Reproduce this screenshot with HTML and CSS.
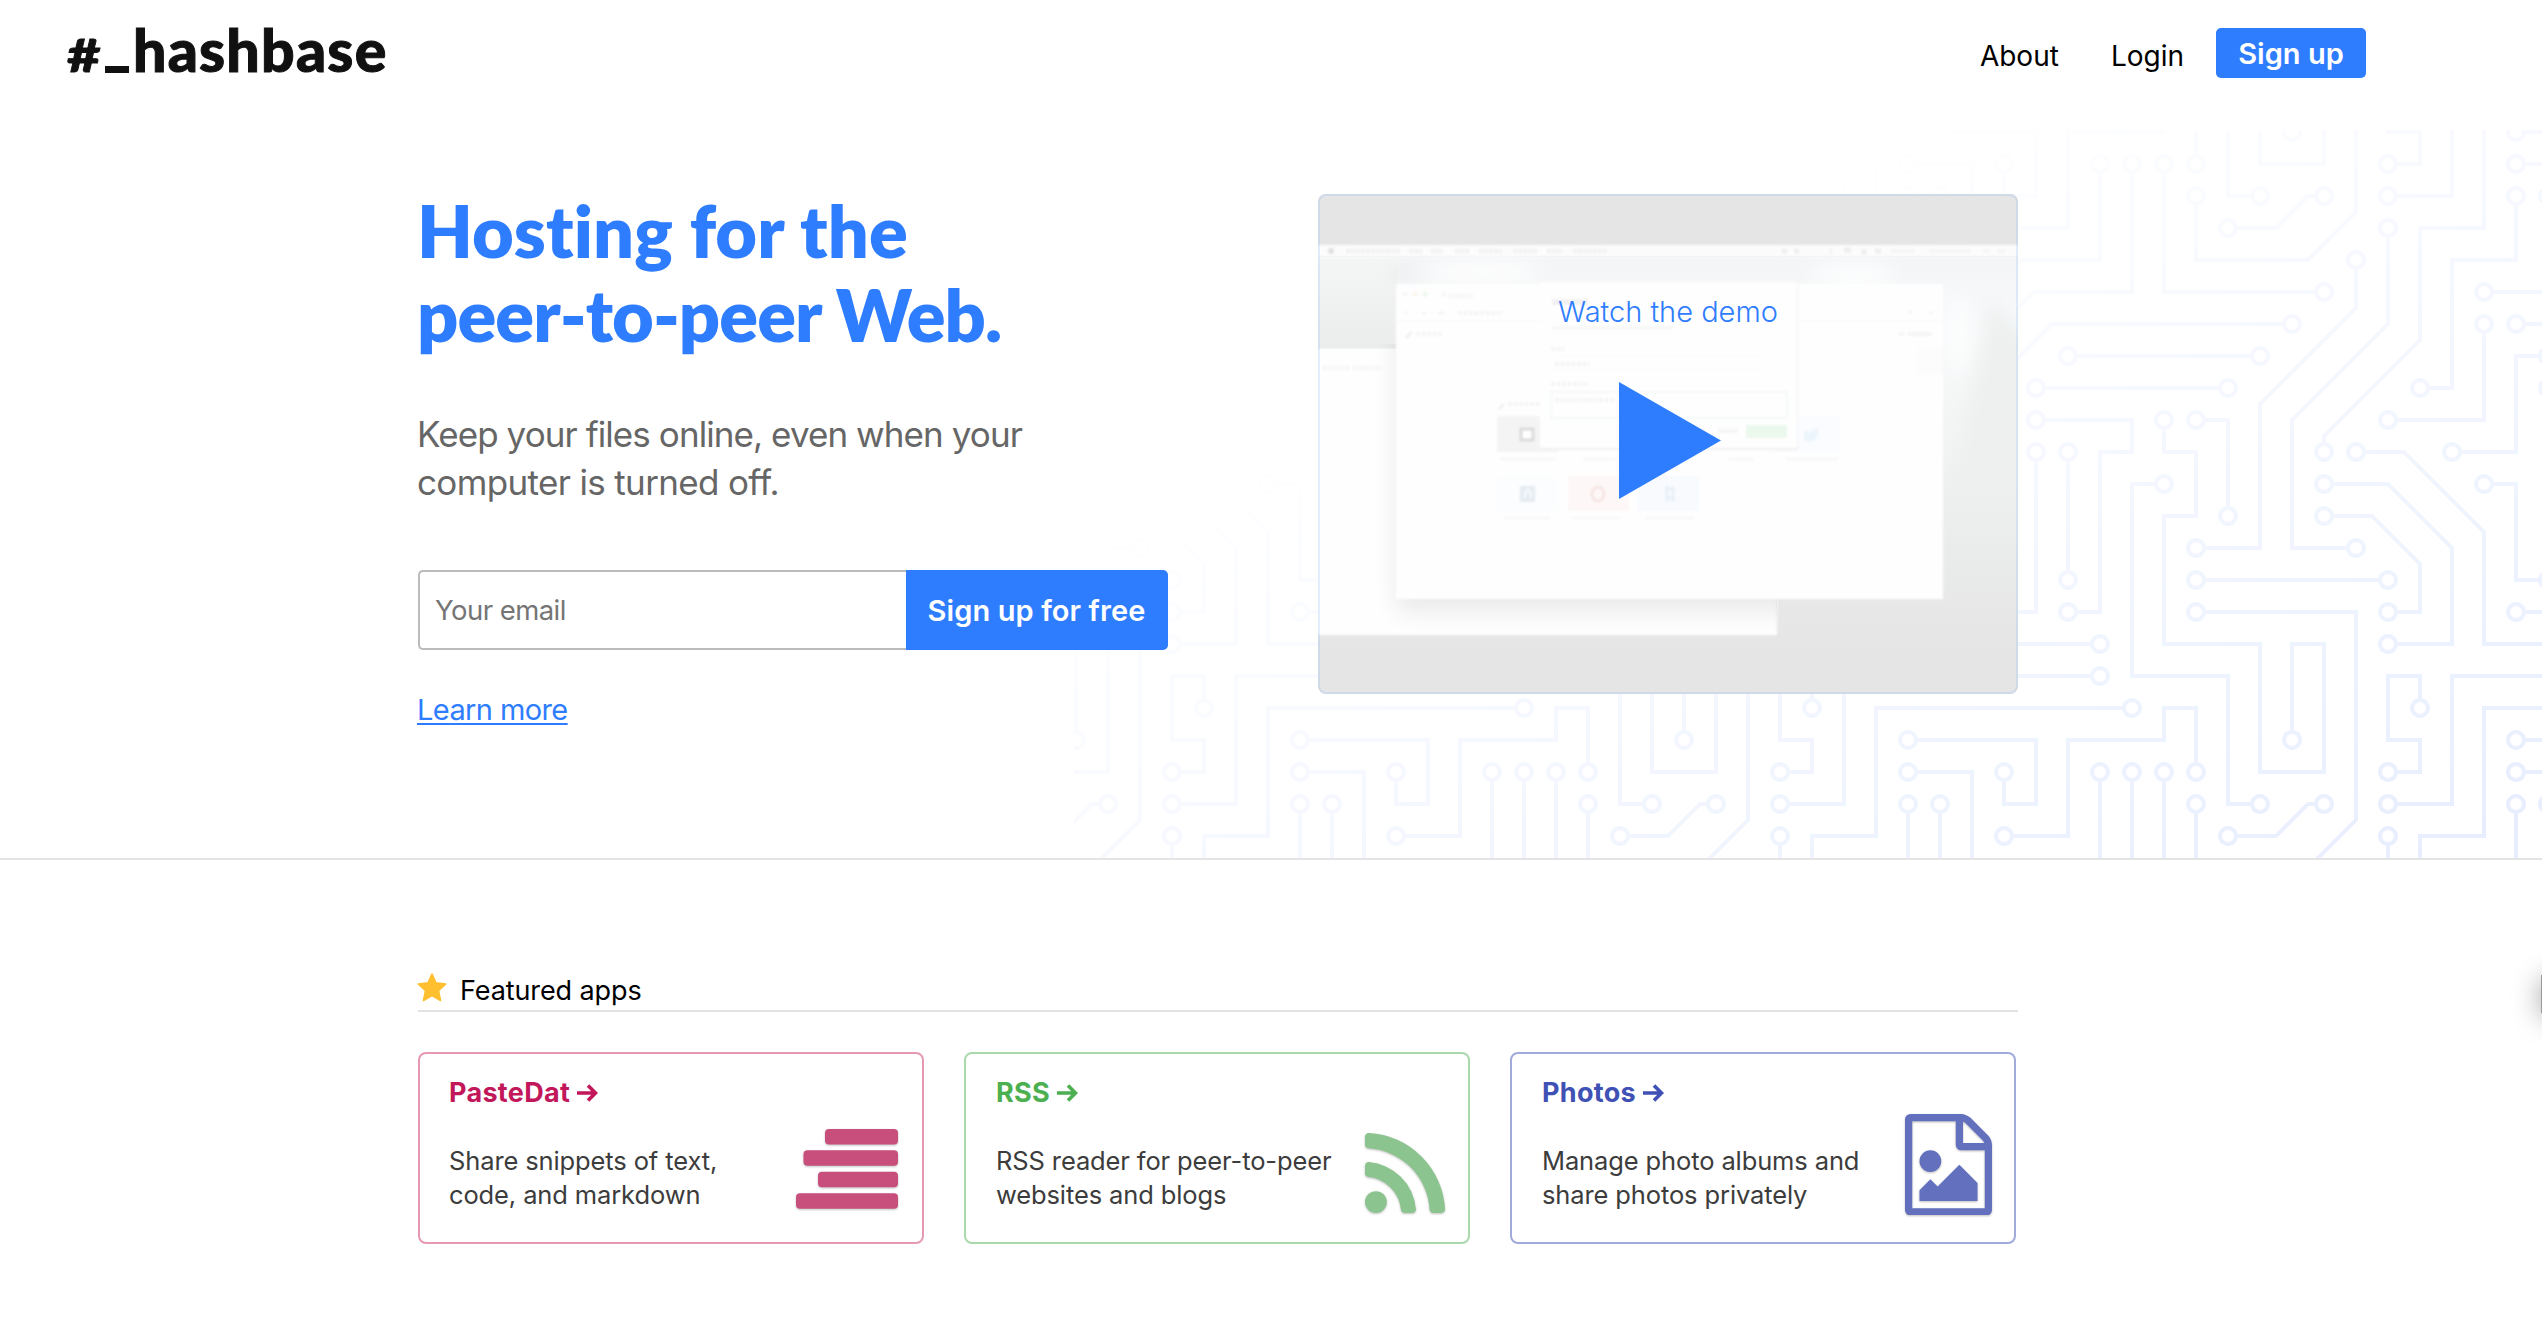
FILE: index.html
```
<!DOCTYPE html>
<html lang="en">
<head>
  <meta charset="utf-8">
  <title>Hashbase</title>
  <link rel="stylesheet" href="styles.css">
</head>
<body>
  <header class="header">
    <a class="logo" href="#"><span class="logo-hash">#</span><span class="logo-bar">_</span><span class="logo-name">hashbase</span></a>
    <nav class="nav">
      <a class="nav-link" href="#">About</a>
      <a class="nav-link nav-login" href="#">Login</a>
      <a class="nav-button" href="#">Sign up</a>
    </nav>
  </header>

  <section class="hero">
    <div class="circuit" aria-hidden="true">
      <svg width="100%" height="100%">
        <defs>
          <pattern id="board" width="304" height="304" patternUnits="userSpaceOnUse" patternTransform="scale(2)">
            <path fill="#e5ecfe" d="M44.1 224a5 5 0 1 1 0 2H0v-2h44.1zm160 48a5 5 0 1 1 0 2H82v-2h122.1zm57.8-46a5 5 0 1 1 0-2H304v2h-42.1zm0 16a5 5 0 1 1 0-2H304v2h-42.1zm6.2-114a5 5 0 1 1 0 2h-86.2a5 5 0 1 1 0-2h86.2zm-256-48a5 5 0 1 1 0 2H0v-2h12.1zm185.8 34a5 5 0 1 1 0-2h86.2a5 5 0 1 1 0 2h-86.2zM258 12.1a5 5 0 1 1-2 0V0h2v12.1zm-64 208a5 5 0 1 1-2 0v-54.2a5 5 0 1 1 2 0v54.2zm48-198.2V80h62v2h-64V21.9a5 5 0 1 1 2 0zm16 16V64h46v2h-48V37.9a5 5 0 1 1 2 0zm-128 96V208h16v12.1a5 5 0 1 1-2 0V210h-16v-76.1a5 5 0 1 1 2 0zm-5.9-21.9a5 5 0 1 1 0 2H114v48H85.9a5 5 0 1 1 0-2H112v-48h12.1zm-6.2 130a5 5 0 1 1 0-2H176v-74.1a5 5 0 1 1 2 0V242h-60.1zm-16-64a5 5 0 1 1 0-2H114v48h10.1a5 5 0 1 1 0 2H112v-48h-10.1zM66 284.1a5 5 0 1 1-2 0V274H50v30h-2v-32h18v12.1zM236.1 176a5 5 0 1 1 0 2H226v94h48v32h-2v-30h-48v-98h12.1zm25.8-30a5 5 0 1 1 0-2H274v44.1a5 5 0 1 1-2 0V146h-10.1zm-64 96a5 5 0 1 1 0-2H208v-80h16v-14h-42.1a5 5 0 1 1 0-2H226v18h-16v80h-12.1zm86.2-210a5 5 0 1 1 0 2H272V0h2v32h10.1zM98 101.9V146H53.9a5 5 0 1 1 0-2H96v-42.1a5 5 0 1 1 2 0zM53.9 34a5 5 0 1 1 0-2H80V0h2v34H53.9zm60.1 3.9V66H82v64H69.9a5 5 0 1 1 0-2H80V64h32V37.9a5 5 0 1 1 2 0zM101.9 82a5 5 0 1 1 0-2H128V37.9a5 5 0 1 1 2 0V82h-28.1zm16-64a5 5 0 1 1 0-2H146v44.1a5 5 0 1 1-2 0V18h-26.1zm102.2 270a5 5 0 1 1 0 2H98v14h-2v-16h124.1zM242 149.9V160h16v34h-16v62h48v48h-2v-46h-48v-66h16v-30h-16v-12.1a5 5 0 1 1 2 0zM53.9 18a5 5 0 1 1 0-2H64V2H48V0h18v18H53.9zm112 32a5 5 0 1 1 0-2H192V0h50v2h-48v48h-28.1zm-48-48a5 5 0 0 1-9.8-2h2.07a3 3 0 1 0 5.66 0H178v34h-18V21.9a5 5 0 1 1 2 0V32h14V2h-58.1zm0 96a5 5 0 1 1 0-2H137l32-32h39V21.9a5 5 0 1 1 2 0V66h-40.17l-32 32H117.9zm28.1 90.1a5 5 0 1 1-2 0v-76.51L175.59 80H224V21.9a5 5 0 1 1 2 0V82h-49.59L146 112.41v75.69zm16 32a5 5 0 1 1-2 0v-99.51L184.59 96H300.1a5 5 0 0 1 3.9-3.9v2.07a3 3 0 0 0 0 5.66v2.07a5 5 0 0 1-3.9-3.9H185.41L162 121.41v98.69zm-144-64a5 5 0 1 1-2 0v-3.51l48-48V48h32V0h2v50H66v55.41l-48 48v2.69zM50 53.9v43.51l-48 48V208h26.1a5 5 0 1 1 0 2H0v-65.41l48-48V53.9a5 5 0 1 1 2 0zm-16 16V89.41l-34 34v-2.82l32-32V69.9a5 5 0 1 1 2 0zM12.1 32a5 5 0 1 1 0 2H9.41L0 43.41V40.6L8.59 32h3.51zm265.8 18a5 5 0 1 1 0-2h18.69l7.41-7.41v2.82L297.41 50H277.9zm-16 160a5 5 0 1 1 0-2H288v-71.41l16-16v2.82l-14 14V210h-28.1zm-208 32a5 5 0 1 1 0-2H64v-22.59L40.59 194H21.9a5 5 0 1 1 0-2H41.41L66 216.59V242H53.9zm150.2 14a5 5 0 1 1 0 2H96v-56.6L56.6 162H37.9a5 5 0 1 1 0-2h19.5L98 200.6V256h106.1zm-150.2 2a5 5 0 1 1 0-2H80v-46.59L48.59 178H21.9a5 5 0 1 1 0-2H49.41L82 208.59V258H53.9zM34 39.8v1.61L9.41 66H0v-2h8.59L32 40.59V0h2v39.8zM2 300.1a5 5 0 0 1 3.9 3.9H3.83A3 3 0 0 0 0 302.17V256h18v48h-2v-46H2v42.1zM34 241v63h-2v-62H0v-2h34v1zM17 18H0v-2h16V0h2v18h-1zm273-2h14v2h-16V0h2v16zm-32 273v15h-2v-14h-14v14h-2v-16h18v1zM0 92.1A5.02 5.02 0 0 1 6 97a5 5 0 0 1-6 4.9v-2.07a3 3 0 1 0 0-5.66V92.1zM80 272h2v32h-2v-32zm37.9 32h-2.07a3 3 0 0 0-5.66 0h-2.07a5 5 0 0 1 9.8 0zM5.9 0A5.02 5.02 0 0 1 0 5.9V3.83A3 3 0 0 0 3.83 0H5.9zm294.2 0h2.07A3 3 0 0 0 304 3.83V5.9a5 5 0 0 1-3.9-5.9zm3.9 300.1v2.07a3 3 0 0 0-1.83 1.83h-2.07a5 5 0 0 1 3.9-3.9z"/>
            <path stroke="#fff" stroke-width="6" stroke-linecap="round" d="M49 225h0M209 273h0M257 225h0M257 241h0M273 129h0M177 129h0M17 81h0M193 113h0M289 113h0M257 17h0M193 225h0M193 161h0M241 17h0M257 33h0M145 225h0M129 129h0M129 113h0M81 161h0M113 241h0M177 161h0M97 177h0M129 225h0M65 289h0M241 177h0M257 145h0M273 193h0M193 241h0M177 145h0M289 33h0M49 145h0M97 97h0M49 33h0M113 33h0M65 129h0M97 81h0M129 33h0M113 17h0M145 65h0M225 289h0M241 145h0M49 17h0M161 49h0M161 17h0M113 97h0M209 17h0M145 193h0M225 17h0M161 225h0M17 161h0M33 209h0M49 49h0M33 65h0M17 33h0M273 49h0M257 209h0M49 241h0M17 193h0M209 257h0M33 161h0M49 257h0M17 177h0"/>
          </pattern>
        </defs>
        <rect width="100%" height="100%" fill="url(#board)"/>
      </svg>
    </div>
    <div class="hero-inner">
      <div class="pitch">
        <h1 class="headline"><span class="line-one">Hosting for the</span><br><span class="line-two">peer-to-peer Web.</span></h1>
        <p class="tagline">Keep your files online, even when your<br><span class="tagline-end">computer is turned off.</span></p>
        <form class="signup">
          <input class="signup-email" type="email" placeholder="Your email">
          <button class="signup-button" type="button">Sign up for free</button>
        </form>
        <a class="learn-more" href="#">Learn more</a>
      </div>

      <div class="video">
        <svg class="video-still" viewBox="0 0 700 500" width="700" height="500" aria-hidden="true">
          <defs>
            <linearGradient id="sky" x1="0" y1="0" x2="0" y2="1">
              <stop offset="0" stop-color="#f3f5f7"/><stop offset=".2" stop-color="#f8fafb"/>
              <stop offset=".45" stop-color="#f3f4f4"/><stop offset=".75" stop-color="#eaebeb"/><stop offset="1" stop-color="#e6e6e6"/>
            </linearGradient>
            <linearGradient id="rock" x1="0" y1="0" x2="0" y2="1">
              <stop offset="0" stop-color="#f4f5f5"/><stop offset="1" stop-color="#ebedec"/>
            </linearGradient>
            <filter id="soft" x="-5%" y="-5%" width="110%" height="110%"><feGaussianBlur stdDeviation="1"/></filter>
            <filter id="haze" filterUnits="userSpaceOnUse" x="0" y="0" width="700" height="500"><feGaussianBlur stdDeviation="9"/></filter>
            <filter id="glow" x="-20%" y="-20%" width="140%" height="140%"><feGaussianBlur stdDeviation="12"/></filter>
            <clipPath id="term"><rect x="0" y="150" width="459" height="291"/></clipPath>
          </defs>
          <rect width="700" height="500" fill="#e5e5e5"/>
          <rect y="63" width="700" height="385" fill="url(#sky)"/>
          <rect y="63" width="80" height="92" fill="url(#rock)"/>
          <g filter="url(#haze)">
            <ellipse cx="165" cy="78" rx="55" ry="12" fill="#fdfdfd"/>
            <ellipse cx="535" cy="82" rx="40" ry="12" fill="#fdfefe"/>
            <ellipse cx="641" cy="140" rx="10" ry="38" fill="#fdfefe"/>
            <path d="M671 105 662 160 650 215 640 300 715 300 715 150z" fill="#edf0ef"/>
            <ellipse cx="85" cy="80" rx="12" ry="6" fill="#e8e9ea"/>
          </g>
          <path d="M0 448h700v52H0zM0 0h700v51H0z" fill="#e5e5e5"/>
          <g filter="url(#soft)">
            <rect x="-4" y="51" width="708" height="12" fill="#fcfcfc"/>
            <rect x="-4" y="155" width="463" height="286" fill="#fefefe"/>
          </g>
          <g clip-path="url(#term)"><rect x="78" y="100" width="547" height="318" fill="#000" opacity=".08" filter="url(#glow)"/></g>
          <g filter="url(#soft)">
            <rect x="78" y="90" width="547" height="315" fill="#fefefe"/>
            <rect x="179" y="222" width="61" height="36" fill="#f4f4f4"/>
            <rect x="179" y="282" width="61" height="35" fill="#fcfdfe"/>
            <rect x="250" y="282" width="61" height="35" fill="#fdf8f7"/>
            <rect x="320" y="282" width="61" height="35" fill="#f8fafe"/>
            <rect x="450" y="222" width="72" height="36" fill="#fafcff"/>
            <path d="M78 127h547" stroke="#fafafa" stroke-width="2"/>
            <rect x="223" y="91" width="257" height="165" fill="#f0f0f0"/>
            <rect x="222" y="88" width="257" height="166" fill="#fefefe"/>
            <rect x="233" y="198" width="236" height="26" fill="none" stroke="#f3f5f5" stroke-width="1.500"/>
            <path d="M233 163h215M233 176h215" stroke="#fbfbfb"/>
            <rect x="428" y="231" width="41" height="13" fill="#ebf8ec"/>
            <rect x="599" y="154" width="26" height="26" fill="#fcfcfc"/>
            <rect x="203" y="235" width="12" height="11" fill="#fff" stroke="#dadada" stroke-width="3"/>
            <rect x="202" y="292" width="15" height="16" fill="#e4ebf2"/>
            <path d="M207 304v-5l3-3 3 3v5" stroke="#fafcfe" stroke-width="2" fill="none"/>
            <ellipse cx="280" cy="300" rx="6" ry="7" fill="none" stroke="#f7e5e4" stroke-width="3"/>
            <path d="M347 295h10M347 304h10M349 292v16M355 292v16" stroke="#e8eff8" stroke-width="2.500"/>
            <path d="M486 235q4 5 8 2 2-4 7-1-2 11-9 12-4 0-6-2z" fill="#ecf5fc"/>
            <circle cx="13" cy="57" r="3" fill="#e0e0e0"/>
            <circle cx="87" cy="100" r="2.500" fill="#faf5f5"/><circle cx="97" cy="100" r="2.500" fill="#fbf5ec"/><circle cx="107" cy="100" r="2.500" fill="#edf6ed"/>
            <path d="M88 144l6-6M181 215l5-5" stroke="#ebebeb" stroke-width="2"/>
            <path d="M126 97v6M120 119h6M104 119h4M86 119h4M590 118h4M611 119h4" stroke="#f5f5f5" stroke-width="3"/>
            <path d="M464 57h5M476 57h5M512 57h2M526 56h7M543 58h6M557 57h6" stroke="#eee" stroke-width="5"/>
            <path d="M573 57h24M611 57h42M665 57h7M679 57h9" stroke="#f5f5f5" stroke-width="4"/>
            <path d="M581 140h5M590 140h24M400 237h20" stroke="#f5f5f5" stroke-width="4"/>
            <path d="M182 265h55M265 265h33M410 265h26M468 265h52M186 324h46M254 324h48M328 324h48" stroke="#f7f7f7" stroke-width="3"/>
            <path d="M233 134h122" stroke="#f8f8f8" stroke-width="4"/>
            <path d="M28 57h55M91 57h13M113 57h12M137 57h15M161 57h23M195 57h25M229 57h16M255 57h35" stroke="#f1f1f1" stroke-width="4" stroke-dasharray="4 1"/>
            <path d="M5 174h26M35 174h29M131 102h24M140 119h45M98 140h28M190 210h32M233 155h13M237 170h35M233 190h36M237 206h60" stroke="#f5f5f5" stroke-width="4" stroke-dasharray="4 1.500"/>
            <path d="M234 108h36" stroke="#f1f1f1" stroke-width="6"/>
          </g>
        </svg>
        <div class="video-overlay">
          <span class="video-label">Watch the demo</span>
          <svg class="play" width="102" height="117" viewBox="0 0 102 117"><path d="M0 0l102 58.500L0 117z" fill="#2f7dff"/></svg>
        </div>
      </div>
    </div>
  </section>

  <section class="featured">
    <h2 class="featured-title">
      <svg class="star" width="30" height="29" viewBox="0 0 30 29"><path d="M15 1l4 8.900 9.700 1.100-7.200 6.600 2 9.900L15 22.600l-8.500 4.900 2-9.900L1.300 11l9.700-1.100z" fill="#ffbf2f" stroke="#ffbf2f" stroke-width="1.600" stroke-linejoin="round"/></svg>
      <span class="featured-label">Featured apps</span>
    </h2>
    <div class="cards">
      <a class="card card-paste" href="#">
        <div>
          <h3 class="card-title">PasteDat<svg class="arrow" width="21" height="18" viewBox="0 0 21 18"><path d="M0 9h18M11 1.500L18.500 9 11 16.500" fill="none" stroke="currentColor" stroke-width="3.600"/></svg></h3>
          <p class="card-text">Share snippets of text,<br>code, and markdown</p>
        </div>
        <svg class="card-icon" width="102" height="80" viewBox="0 0 102 80" fill="#c84e7c"><rect x="29" width="73" height="15.500" rx="4"/><rect x="7.500" y="21.300" width="94.500" height="15.500" rx="4"/><rect x="22" y="42.700" width="80" height="15.500" rx="4"/><rect y="64.200" width="102" height="15.500" rx="4"/></svg>
      </a>
      <a class="card card-rss" href="#">
        <div>
          <h3 class="card-title">RSS<svg class="arrow" width="21" height="18" viewBox="0 0 21 18"><path d="M0 9h18M11 1.500L18.500 9 11 16.500" fill="none" stroke="currentColor" stroke-width="3.600"/></svg></h3>
          <p class="card-text">RSS reader for peer-to-peer<br>websites and blogs</p>
        </div>
        <svg class="card-icon" width="80" height="80" viewBox="0 128 1408 1408" fill="#8bc48f"><path d="M384 1344q0 80-56 136t-136 56-136-56-56-136 56-136 136-56 136 56 56 136zm512 123q2 28-17 48-18 21-47 21h-135q-25 0-43-16.500t-20-41.500q-22-229-184.500-391.500t-391.500-184.500q-25-2-41.500-20t-16.500-43v-135q0-29 21-47 17-17 43-17h5q160 13 306 80.500t259 181.500q114 113 181.500 259t80.500 306zm512 2q2 27-18 47-18 20-46 20h-143q-26 0-44.500-17.500t-19.500-42.500q-12-215-101-408.500t-231.500-336-336-231.500-408.500-102q-25-1-42.500-19.500t-17.500-43.500v-143q0-28 20-46 18-18 44-18h3q262 13 501.500 120t425.500 294q187 186 294 425.500t120 501.500z"/></svg>
      </a>
      <a class="card card-photos" href="#">
        <div>
          <h3 class="card-title">Photos<svg class="arrow" width="21" height="18" viewBox="0 0 21 18"><path d="M0 9h18M11 1.500L18.500 9 11 16.500" fill="none" stroke="currentColor" stroke-width="3.600"/></svg></h3>
          <p class="card-text">Manage photo albums and<br>share photos privately</p>
        </div>
        <svg class="card-icon" width="87" height="101.500" viewBox="0 0 1536 1792" fill="#6270bd"><path d="M1468 380q28 28 48 76t20 88v1152q0 40-28 68t-68 28h-1344q-40 0-68-28t-28-68v-1600q0-40 28-68t68-28h896q40 0 88 20t76 48zm-444-244v376h376q-10-29-22-41l-313-313q-12-12-41-22zm384 1528v-1024h-416q-40 0-68-28t-28-68v-416h-768v1536h1280zm-128-448v320h-1024v-192l192-192 128 128 384-384zm-832-192q-80 0-136-56t-56-136 56-136 136-56 136 56 56 136-56 136-136 56z"/></svg>
      </a>
    </div>
  </section>

  <div class="side-tab" aria-hidden="true"></div>
</body>
</html>
```
FILE: styles.css
```
* {
  box-sizing: border-box;
}

body {
  position: relative;
  margin: 0;
  min-height: 1342px;
  overflow: hidden;
  background: #fff;
  color: #000;
  font-family: Inter, "Liberation Sans", sans-serif;
}

a {
  color: inherit;
  text-decoration: none;
}

h1, h2, h3, p {
  margin: 0;
}

/* Header */

.header {
  display: flex;
  justify-content: space-between;
  align-items: flex-start;
  height: 130px;
  padding: 0 176px 0 67px;
}

.logo {
  display: flex;
  align-items: baseline;
  padding-top: 15px;
  color: #111;
  font: 900 59px/70px Lato, sans-serif;
  -webkit-text-stroke: 1px #111;
}

.logo-hash {
  width: 36px;
  font-size: 58px;
  transform: scaleY(0.78);
  transform-origin: 50% 58px;
}

.logo-bar {
  width: 24px;
  margin: 0 4px 0 2px;
  background: linear-gradient(#111, #111) 0 51px / 24px 7px no-repeat;
  color: transparent;
  -webkit-text-stroke: 0;
}

.logo-name {
  letter-spacing: 1.2px;
}

.nav {
  display: flex;
  align-items: flex-start;
  padding-top: 28px;
}

.nav-link {
  margin: 8px 52px 0 0;
  font-size: 28px;
  line-height: 40px;
}

.nav-login {
  margin-right: 32px;
}

.nav-button {
  width: 150px;
  height: 50px;
  border-radius: 5px;
  background: #2f7dff;
  color: #fff;
  font-size: 29px;
  font-weight: 600;
  line-height: 52px;
  text-align: center;
}

/* Hero */

.hero {
  position: relative;
  height: 730px;
  border-bottom: 2px solid #e4e4e4;
}

.circuit {
  position: absolute;
  top: 0;
  right: 0;
  bottom: 0;
  left: 1074px;
}

.circuit svg {
  display: block;
}

.circuit::after {
  content: "";
  position: absolute;
  inset: 0;
  background: linear-gradient(to bottom right, #fff 28%, rgba(255, 255, 255, 0) 105%);
}

.hero-inner {
  position: relative;
  display: flex;
  justify-content: space-between;
  align-items: flex-start;
  width: 1600px;
  margin-left: 418px;
}

.pitch {
  width: 750px;
  padding-top: 58px;
}

.headline {
  margin-left: -1px;
  color: #2f7dff;
  font: 800 72px/84px Lato, sans-serif;
}

.line-one {
  letter-spacing: 0.1px;
}

.line-two {
  letter-spacing: -0.95px;
}

.tagline {
  margin: 54px 0 64px -1px;
  color: #666;
  font-size: 35px;
  letter-spacing: -0.92px;
  line-height: 48px;
}

.tagline-end {
  letter-spacing: -0.65px;
}

.signup {
  display: flex;
  height: 80px;
}

.signup-email {
  width: 488px;
  padding: 0 15px;
  border: 2px solid #bbb;
  border-right: 0;
  border-radius: 5px 0 0 5px;
  background: #fff;
  font: 27.5px Inter, sans-serif;
  letter-spacing: -0.55px;
}

.signup-email::placeholder {
  color: #757575;
}

.signup-button {
  width: 262px;
  padding: 0 1px 0 0;
  border: 0;
  border-radius: 0 5px 5px 0;
  background: #2f7dff;
  color: #fff;
  font: 600 29px Inter, sans-serif;
  letter-spacing: 0.1px;
}

.learn-more {
  display: inline-block;
  margin: 40px 0 0 -1px;
  color: #2f7dff;
  font-size: 29px;
  letter-spacing: -0.6px;
  line-height: 40px;
  text-decoration: underline;
  text-decoration-thickness: 2px;
  text-underline-offset: 3px;
}

.video {
  position: relative;
  width: 700px;
  height: 500px;
  margin-top: 64px;
  border-radius: 8px;
  overflow: hidden;
}

.video-still {
  display: block;
}

.video-overlay {
  position: absolute;
  inset: 0;
  display: flex;
  flex-direction: column;
  align-items: center;
  padding-top: 96px;
  border: 2px solid rgba(130, 180, 245, 0.22);
  border-radius: 8px;
}

.video-label {
  color: #2f7dff;
  font-size: 29px;
  font-weight: 350;
  line-height: 40px;
}

.play {
  margin: 50px 0 0 4px;
}

/* Featured apps */

.featured {
  width: 1600px;
  margin-left: 418px;
  padding-top: 110px;
}

.featured-title {
  display: flex;
  height: 42px;
  border-bottom: 2px solid #e3e3e3;
  font-size: 27px;
  font-weight: 400;
  line-height: 40px;
}

.featured-label {
  padding-top: 1px;
  letter-spacing: -0.1px;
}

.star {
  margin: 3px 13px 0 -1px;
}

.cards {
  display: flex;
  gap: 40px;
  margin-top: 40px;
}

.card {
  display: flex;
  justify-content: space-between;
  align-items: flex-end;
  width: 506px;
  height: 192px;
  padding: 0 24px 0 30px;
  border: 2px solid;
  border-radius: 8px;
}

.card > div {
  align-self: flex-start;
  padding-top: 22px;
}

.card-title {
  font-size: 27px;
  font-weight: 700;
  letter-spacing: 0.3px;
  line-height: 34px;
}

.arrow {
  margin-left: 7px;
}

.card-text {
  margin-top: 34px;
  color: #3c3c3c;
  font-size: 25.5px;
  letter-spacing: -0.12px;
  line-height: 34px;
}

.card-icon {
  filter: drop-shadow(0 1px 1px rgba(0, 0, 0, 0.25));
}

.card-paste {
  padding-left: 29px;
  border-color: #e599b4;
}

.card-paste .card-title {
  color: #c2185b;
}

.card-paste .card-icon {
  margin-bottom: 33px;
}

.card-rss {
  padding-right: 23px;
  border-color: #aad9ac;
}

.card-rss .card-title {
  color: #4caf50;
}

.card-rss .card-icon {
  margin-bottom: 29px;
}

.card-photos {
  padding-right: 22px;
  border-color: #a0aadb;
}

.card-photos .card-title {
  color: #3f51b5;
}

.card-photos .card-icon {
  margin-bottom: 27px;
}

/* Tab that peeks in from the right edge of the window */

.side-tab {
  position: absolute;
  top: 975px;
  left: 2541px;
  width: 40px;
  height: 38px;
  background: #999;
  box-shadow: 0 4px 28px rgba(0, 0, 0, 0.36);
}
```
